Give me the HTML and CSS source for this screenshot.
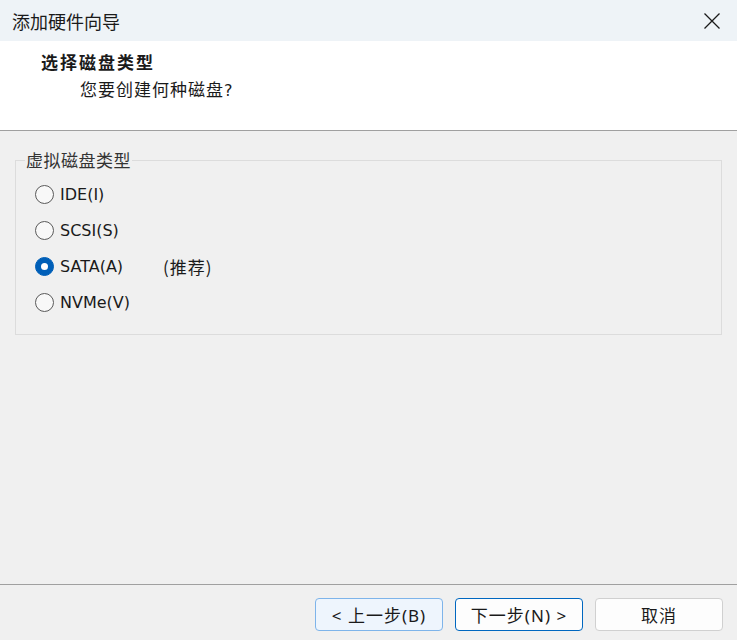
FILE: index.html
```html
<!DOCTYPE html>
<html lang="zh-CN">
<head>
    <meta charset="UTF-8">
    <meta name="viewport" content="width=device-width, initial-scale=1.0">
    <title>添加硬件向导</title>
    <link rel="stylesheet" href="styles.css">
</head>
<body>

    <!-- Window title bar -->
    <div class="titlebar">
        <span class="title">添加硬件向导</span>
        <span class="close">
            <svg width="18" height="18" viewBox="0 0 18 18">
                <path d="M1.5 1.5 L16.5 16.5 M16.5 1.5 L1.5 16.5" stroke="#1a1a1a" stroke-width="1.3" fill="none"/>
            </svg>
        </span>
    </div>

    <!-- Wizard page header -->
    <div class="header">
        <div class="header-title">选择磁盘类型</div>
        <div class="header-sub">您要创建何种磁盘<span class="qmark">?</span></div>
    </div>

    <div class="content">
        <fieldset class="group">
            <legend>虚拟磁盘类型</legend>
            <div class="options">
                <div class="option"><span class="radio"></span><span class="label">IDE(I)</span></div>
                <div class="option"><span class="radio"></span><span class="label">SCSI(S)</span></div>
                <div class="option"><span class="radio checked"></span><span class="label">SATA(A)</span><span class="hint">(推荐)</span></div>
                <div class="option"><span class="radio"></span><span class="label">NVMe(V)</span></div>
            </div>
        </fieldset>
    </div>

    <!-- Navigation buttons -->
    <div class="footer">
        <button class="btn btn-back">&lt; 上一步(B)</button>
        <button class="btn btn-next">下一步(N) &gt;</button>
        <button class="btn">取消</button>
    </div>

</body>
</html>
```

FILE: styles.css
```css
/* General window style */
body {
    margin: 0;
    padding: 0;
    width: 737px;
    height: 640px;
    background-color: #f0f0f0;
    font-family: "Noto Sans", "Noto Sans CJK SC", sans-serif;
    color: #1a1a1a;
    display: flex;
    flex-direction: column;
    overflow: hidden;
}

.titlebar {
    height: 41px;
    background-color: #eef3f7;
    display: flex;
    align-items: center;
    justify-content: space-between;
    padding: 0 16px 0 12px;
    flex-shrink: 0;
}

.title {
    font-family: "Noto Sans CJK SC", sans-serif;
    font-size: 18px;
    color: #1a1a1a;
}

.close {
    display: flex;
}

.header {
    height: 89px;
    background-color: #ffffff;
    border-bottom: 1px solid #a0a0a0;
    flex-shrink: 0;
    font-family: "Liberation Serif", "Noto Sans CJK SC", serif;
}

.header-title {
    font-weight: bold;
    font-size: 17px;
    letter-spacing: 2px;
    margin: 12px 0 0 41px;
    line-height: 22px;
}

.header-sub {
    font-size: 17px;
    letter-spacing: 1px;
    margin: 5px 0 0 80px;
    line-height: 22px;
}

.qmark {
    font-family: "DejaVu Sans", sans-serif;
    font-size: 16px;
}

.content {
    flex: 1;
    padding: 18px 15px 0 15px;
}

.group {
    margin: 0;
    border: 1px solid #dcdcdc;
    padding: 0 0 0 9px;
    height: 184px;
}

.group legend {
    font-family: "Noto Sans CJK SC", sans-serif;
    font-size: 17px;
    letter-spacing: 0.5px;
    line-height: 22px;
    color: #333333;
    padding: 0 1px;
}

.options {
    margin: 5px 0 0 10px;
}

.option {
    display: flex;
    align-items: center;
    height: 36px;
}

.radio {
    width: 17px;
    height: 17px;
    border: 1px solid #5a5a5a;
    border-radius: 50%;
    background-color: #f8f8f8;
    box-sizing: content-box;
    position: relative;
    flex-shrink: 0;
}

.radio.checked {
    border-color: #005fb8;
    background-color: #005fb8;
}

.radio.checked::after {
    content: "";
    position: absolute;
    left: 5px;
    top: 5px;
    width: 7px;
    height: 7px;
    border-radius: 50%;
    background-color: #ffffff;
}

.label {
    font-family: "DejaVu Sans", sans-serif;
    font-size: 16px;
    margin-left: 6px;
    width: 103px;
}

.hint {
    font-family: "Noto Sans CJK SC", sans-serif;
    font-size: 17px;
    letter-spacing: 1px;
}

.footer {
    height: 56px;
    box-sizing: border-box;
    border-top: 1px solid #a0a0a0;
    flex-shrink: 0;
    display: flex;
    justify-content: flex-end;
    align-items: flex-start;
    gap: 12px;
    padding: 13px 14px 0 0;
}

.btn {
    width: 128px;
    height: 33px;
    border: 1px solid #d0d0d0;
    border-radius: 4px;
    background-color: #fdfdfd;
    font-family: "Noto Sans", "Noto Sans CJK SC", sans-serif;
    font-size: 17px;
    letter-spacing: 1px;
    color: #1a1a1a;
    padding: 0;
}

.btn-back {
    background-color: #eef5fd;
    border-color: #7eb4ea;
}

.btn-next {
    border-color: #0067c0;
}
```
